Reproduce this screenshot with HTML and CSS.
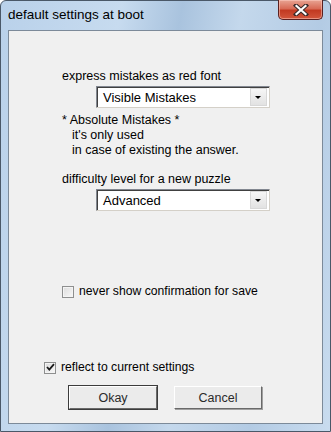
FILE: index.html
```html
<!DOCTYPE html>
<html lang="en">
<head>
    <meta charset="UTF-8">
    <title>default settings at boot</title>
    <link rel="stylesheet" href="styles.css">
</head>
<body>
    <div class="window">
        <div class="titlebar">
            <span class="title">default settings at boot</span>
            <button type="button" class="btn-close">
                <svg width="16" height="12" viewBox="0 0 16 12">
                    <path d="M3 1.5 L13 10.5 M13 1.5 L3 10.5" stroke="#3a2a2a" stroke-width="4.2" stroke-linecap="square"/>
                    <path d="M3.5 2 L12.5 10 M12.5 2 L3.5 10" stroke="#fff" stroke-width="2.2" stroke-linecap="square"/>
                </svg>
            </button>
        </div>
        <div class="client">
            <div class="settings">
                <p class="label">express mistakes as red font</p>
                <div class="combo">
                    <span class="combo-value">Visible Mistakes</span>
                    <span class="combo-arrow"></span>
                </div>
                <div class="note">
                    <p>* Absolute Mistakes *</p>
                    <p class="indent">it's only used</p>
                    <p class="indent">in case of existing the answer.</p>
                </div>
                <p class="label label-level">difficulty level for a new puzzle</p>
                <div class="combo">
                    <span class="combo-value">Advanced</span>
                    <span class="combo-arrow"></span>
                </div>
                <label class="check check-confirm">
                    <span class="box"></span>
                    never show confirmation for save
                </label>
            </div>
            <label class="check check-reflect">
                <span class="box checked">
                    <svg width="9" height="9" viewBox="0 0 9 9">
                        <path d="M1 4 L3.3 6.6 L8 1.2" fill="none" stroke="#1a1a1a" stroke-width="1.8"/>
                    </svg>
                </span>
                reflect to current settings
            </label>
            <div class="actions">
                <button type="button" class="btn btn-default">Okay</button>
                <button type="button" class="btn">Cancel</button>
            </div>
        </div>
    </div>
</body>
</html>
```

FILE: styles.css
```css
body {
    margin: 0;
    padding: 0;
    font-family: "Liberation Sans", Arial, sans-serif;
    font-size: 12.5px;
    color: #000;
    background-color: #fff;
}

p {
    margin: 0;
}

.window {
    box-sizing: border-box;
    width: 331px;
    height: 432px;
    display: flex;
    flex-direction: column;
    border: 1px solid #4a5868;
    border-radius: 6px 6px 0 0;
    background: linear-gradient(100deg, #b9d1ea 0%, #c7dbef 30%, #a9c3de 45%, #c4d8ec 60%, #b3cbe4 80%, #c9dcef 100%);
}

.titlebar {
    height: 29px;
    display: flex;
    justify-content: space-between;
    align-items: flex-start;
    padding-left: 7px;
    padding-right: 7px;
}

.title {
    margin-top: 6px;
    font-size: 13.5px;
    color: #000;
}

.btn-close {
    width: 45px;
    height: 20px;
    margin-top: -1px;
    padding: 0;
    border: 1px solid #5a2020;
    border-top: none;
    border-radius: 0 0 5px 5px;
    background: linear-gradient(180deg, #e8a493 0%, #d86b56 45%, #c23a22 55%, #d2563c 100%);
    box-shadow: inset 0 0 0 1px rgba(255, 210, 200, 0.5);
    display: flex;
    align-items: center;
    justify-content: center;
}

.client {
    flex: 1;
    margin: 0 7px 7px 7px;
    border: 1px solid #7c8a99;
    background-color: #f0f0f0;
    display: flex;
    flex-direction: column;
    padding: 38px 0 0 0;
}

.settings {
    padding-left: 53px;
    flex: 1;
}

.label {
    line-height: 15px;
}

.combo {
    box-sizing: border-box;
    width: 174px;
    height: 22px;
    margin: 2px 0 0 34px;
    display: flex;
    align-items: center;
    justify-content: space-between;
    border: 1px solid #828790;
    border-right-color: #d4d0c8;
    border-bottom-color: #d4d0c8;
    box-shadow: inset 1px 1px 0 #404040;
    background-color: #fff;
    padding: 0 2px 0 6px;
    font-size: 13px;
}

.combo-arrow {
    width: 15px;
    height: 16px;
    border: 1px solid #d8d8d8;
    background: linear-gradient(180deg, #f6f6f6, #e2e2e2);
    position: relative;
}

.combo-arrow::after {
    content: "";
    position: absolute;
    left: 4px;
    top: 7px;
    border-left: 3px solid transparent;
    border-right: 3px solid transparent;
    border-top: 3px solid #000;
}

.note {
    margin-top: 5px;
    line-height: 15px;
}

.note .indent {
    padding-left: 10px;
}

.label-level {
    margin-top: 14px;
}

.check {
    display: flex;
    align-items: center;
    gap: 5px;
    line-height: 15px;
    font-size: 12.2px;
}

.box {
    box-sizing: border-box;
    width: 12px;
    height: 12px;
    border: 1px solid #8e8f8f;
    background: linear-gradient(135deg, #dcdcdc, #f8f8f8);
    box-shadow: inset 0 0 0 1px #f4f4f4;
    display: flex;
    align-items: center;
    justify-content: center;
}

.check-confirm {
    margin-top: 73px;
}

.check-reflect {
    padding-left: 35px;
}

.actions {
    display: flex;
    gap: 17px;
    padding: 11px 0 14px 60px;
}

.btn {
    box-sizing: border-box;
    width: 88px;
    height: 23px;
    font-family: "Liberation Sans", Arial, sans-serif;
    font-size: 12.5px;
    font-weight: normal;
    color: #2a2a2a;
    border: 1px solid #fff;
    border-right-color: #696969;
    border-bottom-color: #696969;
    box-shadow: 1px 1px 0 #a0a0a0;
    background-color: #ebebeb;
    padding: 0;
}

.btn-default {
    outline: 1px solid #3c3c3c;
}
```
